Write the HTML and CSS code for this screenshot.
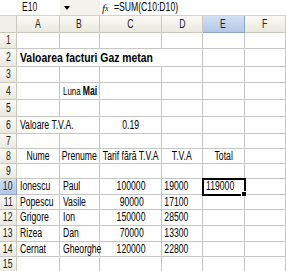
FILE: index.html
```html
<!DOCTYPE html>
<html>
<head>
<meta charset="utf-8">
<link rel="stylesheet" href="styles.css">
</head>
<body>
<div class="fbar">
  <div class="namebox"><span class="t tc">E10</span></div>
  <div class="combo"><span class="arrow"></span></div>
  <div class="fx"><i>f</i><span class="x">x</span></div>
  <div class="formula"><span class="t">=SUM(C10:D10)</span></div>
</div>
<div class="sheet">
  <!-- header -->
  <div class="h corner"></div>
  <div class="h"><span class="t tc">A</span></div>
  <div class="h"><span class="t tc">B</span></div>
  <div class="h"><span class="t tc">C</span></div>
  <div class="h"><span class="t tc">D</span></div>
  <div class="h sel"><span class="t tc">E</span></div>
  <div class="h"><span class="t tc">F</span></div>
  <!-- 1 -->
  <div class="h rh"><span class="t tc">1</span></div>
  <div class="c"></div><div class="c"></div><div class="c"></div><div class="c"></div><div class="c"></div><div class="c"></div>
  <!-- 2 -->
  <div class="h rh"><span class="t tc">2</span></div>
  <div class="c l span4 title"><span class="t">Valoarea facturi Gaz metan</span></div>
  <div class="c"></div><div class="c"></div>
  <!-- 3 -->
  <div class="h rh"><span class="t tc">3</span></div>
  <div class="c"></div><div class="c"></div><div class="c"></div><div class="c"></div><div class="c"></div><div class="c"></div>
  <!-- 4 -->
  <div class="h rh"><span class="t tc">4</span></div>
  <div class="c"></div>
  <div class="c l"><span class="t luna">Luna <b>Mai</b></span></div>
  <div class="c"></div><div class="c"></div><div class="c"></div><div class="c"></div>
  <!-- 5 -->
  <div class="h rh"><span class="t tc">5</span></div>
  <div class="c"></div><div class="c"></div><div class="c"></div><div class="c"></div><div class="c"></div><div class="c"></div>
  <!-- 6 -->
  <div class="h rh"><span class="t tc">6</span></div>
  <div class="c l span2"><span class="t">Valoare T.V.A.</span></div>
  <div class="c cc"><span class="t tc">0.19</span></div>
  <div class="c"></div><div class="c"></div><div class="c"></div>
  <!-- 7 -->
  <div class="h rh"><span class="t tc">7</span></div>
  <div class="c"></div><div class="c"></div><div class="c"></div><div class="c"></div><div class="c"></div><div class="c"></div>
  <!-- 8 -->
  <div class="h rh"><span class="t tc">8</span></div>
  <div class="c cc"><span class="t tc">Nume</span></div>
  <div class="c cc"><span class="t tc">Prenume</span></div>
  <div class="c cc"><span class="t tc">Tarif fără T.V.A</span></div>
  <div class="c cc"><span class="t tc">T.V.A</span></div>
  <div class="c cc"><span class="t tc">Total</span></div>
  <div class="c"></div>
  <!-- 9 -->
  <div class="h rh"><span class="t tc">9</span></div>
  <div class="c"></div><div class="c"></div><div class="c"></div><div class="c"></div><div class="c"></div><div class="c"></div>
  <!-- 10 -->
  <div class="h rh sel"><span class="t tc">10</span></div>
  <div class="c l"><span class="t">Ionescu</span></div>
  <div class="c l"><span class="t">Paul</span></div>
  <div class="c cc num"><span class="t tc">100000</span></div>
  <div class="c r"><span class="t tr">19000</span></div>
  <div class="c l active"><span class="t">119000</span></div>
  <div class="c"></div>
  <!-- 11 -->
  <div class="h rh"><span class="t tc">11</span></div>
  <div class="c l"><span class="t">Popescu</span></div>
  <div class="c l"><span class="t">Vasile</span></div>
  <div class="c cc num"><span class="t tc">90000</span></div>
  <div class="c r"><span class="t tr">17100</span></div>
  <div class="c"></div><div class="c"></div>
  <!-- 12 -->
  <div class="h rh"><span class="t tc">12</span></div>
  <div class="c l"><span class="t">Grigore</span></div>
  <div class="c l"><span class="t">Ion</span></div>
  <div class="c cc num"><span class="t tc">150000</span></div>
  <div class="c r"><span class="t tr">28500</span></div>
  <div class="c"></div><div class="c"></div>
  <!-- 13 -->
  <div class="h rh"><span class="t tc">13</span></div>
  <div class="c l"><span class="t">Rizea</span></div>
  <div class="c l"><span class="t">Dan</span></div>
  <div class="c cc num"><span class="t tc">70000</span></div>
  <div class="c r"><span class="t tr">13300</span></div>
  <div class="c"></div><div class="c"></div>
  <!-- 14 -->
  <div class="h rh"><span class="t tc">14</span></div>
  <div class="c l"><span class="t">Cernat</span></div>
  <div class="c l"><span class="t">Gheorghe</span></div>
  <div class="c cc num"><span class="t tc">120000</span></div>
  <div class="c r"><span class="t tr">22800</span></div>
  <div class="c"></div><div class="c"></div>
  <!-- 15 -->
  <div class="h rh"><span class="t tc">15</span></div>
  <div class="c"></div><div class="c"></div><div class="c"></div><div class="c"></div><div class="c"></div><div class="c"></div>
</div>
</body>
</html>
```
FILE: styles.css
```css
html, body {
  margin: 0;
  padding: 0;
  background: #fff;
  width: 286px;
  height: 271px;
  overflow: hidden;
  font-family: "Liberation Sans", Arial, sans-serif;
  font-size: 12px;
  color: #000;
}

.t {
  display: inline-block;
  white-space: nowrap;
  transform: scaleX(0.72);
  transform-origin: left center;
  line-height: 13px;
}
.tc { transform-origin: center center; }
.tr { transform-origin: right center; }

/* formula bar */
.fbar {
  display: flex;
  height: 16px;
  box-sizing: border-box;
  border-bottom: 1px solid #d6d3c6;
  background: #fff;
}
.namebox {
  width: 60px;
  display: flex;
  align-items: center;
  justify-content: center;
  background: #fff;
  color: #111;
}
.combo {
  width: 40px;
  background: #f3f2ec;
  display: flex;
  align-items: center;
  padding-left: 4px;
  box-sizing: border-box;
}
.arrow {
  width: 0;
  height: 0;
  border-left: 3px solid transparent;
  border-right: 3px solid transparent;
  border-top: 4px solid #000;
}
.fx {
  width: 12px;
  display: flex;
  align-items: center;
  padding-left: 2px;
  font-family: "Liberation Serif", serif;
  font-size: 11px;
  color: #222;
}
.fx i { font-style: italic; }
.fx .x { font-size: 8px; font-style: italic; margin-top: 2px; }
.formula {
  flex: 1;
  display: flex;
  align-items: center;
}

/* sheet */
.sheet {
  display: grid;
  grid-template-columns: 17px 43px 40px 62px 41px 42px 41px;
  grid-template-rows: 17px 16px 18px 16px 17px 17px 17px 15px 15px 15px 16px 15px 16px 16px 15px 16px;
  background: #fff;
}
.h {
  box-sizing: border-box;
  background: linear-gradient(#fbfaf6, #eae8de);
  border-right: 1px solid #cbc9bd;
  border-bottom: 1px solid #cbc9bd;
  display: flex;
  align-items: center;
  justify-content: center;
  color: #222;
}
.h.corner { background: #f1f0ea; }
.h.sel {
  background: linear-gradient(#d3e0f4, #b3c7e6);
  border-right-color: #8fa6c8;
  border-bottom-color: #8fa6c8;
}
.c {
  box-sizing: border-box;
  border-right: 1px solid #c6c6c6;
  border-bottom: 1px solid #c6c6c6;
  display: flex;
  align-items: center;
  white-space: nowrap;
  overflow: visible;
  position: relative;
}
.l { padding-left: 3px; }
.cc { justify-content: center; }
.num { padding-left: 2px; }
.r { justify-content: flex-end; padding-right: 14px; }
.span4 { grid-column: span 4; }
.span2 { grid-column: span 2; }

.title .t {
  font-weight: bold;
  font-size: 13px;
  transform: scaleX(0.8);
  line-height: 14px;
}
.title { align-items: flex-end; padding-bottom: 1px; }
.luna { font-size: 11px; }
.luna b { font-size: 12px; }

.active {
  outline: 2px solid #000;
  outline-offset: -1px;
  z-index: 2;
}
.active::after {
  content: "";
  position: absolute;
  right: -3px;
  bottom: -3px;
  width: 4px;
  height: 4px;
  background: #000;
  border: 1px solid #fff;
  box-sizing: content-box;
}
```
